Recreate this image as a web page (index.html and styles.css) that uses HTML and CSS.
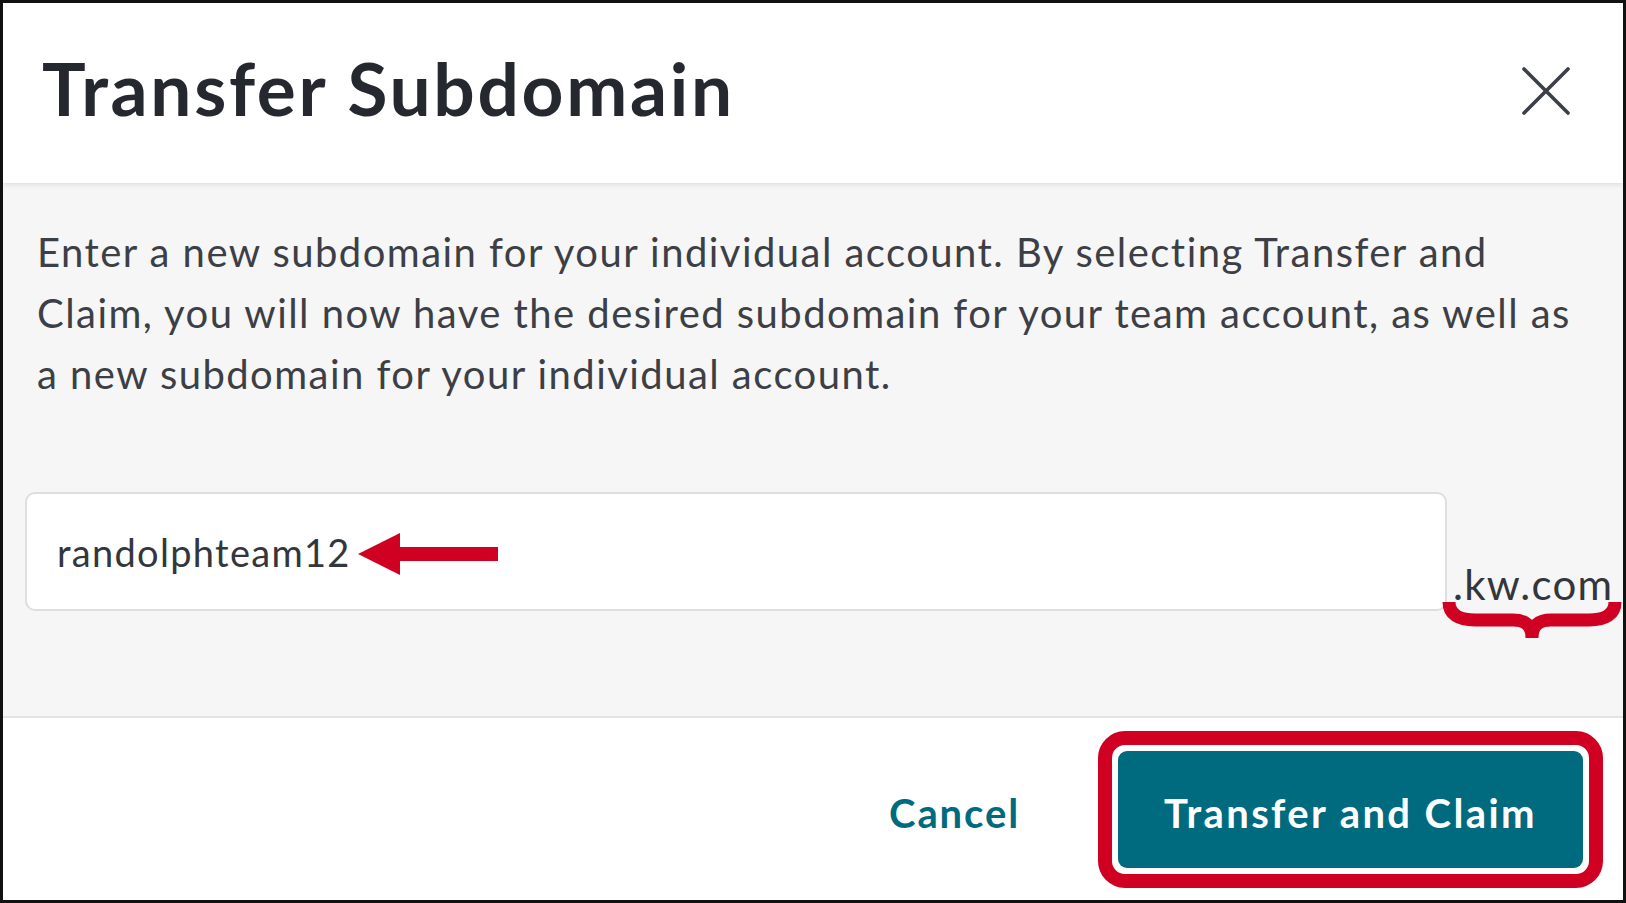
FILE: index.html
```html
<!DOCTYPE html>
<html lang="en">
<head>
<meta charset="utf-8">
<title>Transfer Subdomain</title>
<link rel="stylesheet" href="styles.css">
</head>
<body>
<div class="frame">
  <header class="modal-header">
    <h1 class="title">Transfer Subdomain</h1>
    <button class="close" aria-label="Close">
      <svg viewBox="0 0 48 48" width="48" height="48"><path d="M2 2 L46 46 M46 2 L2 46" stroke="#3b3f46" stroke-width="3.6" stroke-linecap="round" fill="none"/></svg>
    </button>
  </header>
  <main class="modal-body">
    <p class="intro">Enter a new subdomain for your individual account. By selecting Transfer and Claim, you will now have the desired subdomain for your team account, as well as a new subdomain for your individual account.</p>
    <div class="field-row">
      <div class="input">randolphteam12</div>
      <span class="suffix">.kw.com</span>
      <svg class="arrow" width="140" height="42" viewBox="0 0 140 42"><polygon points="0,21 42,0 42,14 140,14 140,28 42,28 42,42" fill="#cf0022"/></svg>
      <svg class="brace" width="184" height="40" viewBox="0 0 184 40"><path d="M8 2 C8 14 17 20 34 20 L72 20 C84 20 91 25 91 38 M174 2 C174 14 165 20 148 20 L110 20 C98 20 91 25 91 38" stroke="#cf0022" stroke-width="13" fill="none"/></svg>
    </div>
  </main>
  <footer class="modal-footer">
    <button class="cancel">Cancel</button>
    <div class="highlight">
      <button class="primary">Transfer and Claim</button>
    </div>
  </footer>
</div>
</body>
</html>
```

FILE: styles.css
```css
* { box-sizing: border-box; }
html, body { margin: 0; padding: 0; background: #ffffff; }
body { font-family: Lato, "Open Sans", sans-serif; }

.frame {
  width: 1626px;
  height: 903px;
  border: 3px solid #111;
  display: flex;
  flex-direction: column;
  background: #fff;
  overflow: hidden;
}

.modal-header {
  height: 180px;
  flex: none;
  display: flex;
  align-items: center;
  justify-content: space-between;
  padding: 0 53px 10px 39px;
  background: #fff;
  box-shadow: 0 2px 5px rgba(0,0,0,0.09);
  position: relative;
  z-index: 2;
}
.title {
  margin: 0;
  font-size: 73px;
  font-weight: 700;
  color: #25282e;
  letter-spacing: 2.7px;
  line-height: 1;
}
.close {
  border: 0;
  background: none;
  padding: 0;
  width: 48px;
  height: 48px;
  display: block;
  margin-top: 6px;
}
.close svg { display: block; }

.modal-body {
  flex: 1;
  background: #f6f6f6;
  padding: 39px 0 0 22px;
}
.intro {
  margin: 0 0 0 12px;
  width: 1550px;
  font-size: 40px;
  line-height: 61px;
  color: #3c3f45;
  letter-spacing: 1.45px;
}

.field-row {
  position: relative;
  margin-top: 87px;
  display: flex;
  align-items: flex-end;
}
.input {
  flex: none;
  width: 1422px;
  height: 119px;
  background: #fff;
  border: 2px solid #dedede;
  border-radius: 10px;
  display: flex;
  align-items: center;
  padding: 0 0 0 30px;
  font-size: 38px;
  color: #33363c;
  letter-spacing: 1.3px;
}
.suffix {
  flex: none;
  font-size: 42px;
  line-height: 42px;
  color: #33363c;
  margin: 0 0 6px 6px;
  letter-spacing: 1.3px;
}
.arrow {
  position: absolute;
  left: 333px;
  top: 41px;
}
.brace {
  position: absolute;
  left: 1416px;
  top: 108px;
}

.modal-footer {
  height: 184px;
  flex: none;
  border-top: 2px solid #e3e3e3;
  background: #fff;
  display: flex;
  align-items: center;
  justify-content: flex-end;
  padding-right: 20px;
}
.cancel {
  border: 0;
  background: none;
  font-family: Lato, "Open Sans", sans-serif;
  font-size: 40px;
  font-weight: 700;
  color: #006a7f;
  padding: 8px 0 0 0;
  margin-right: 78px;
  letter-spacing: 1.9px;
}
.highlight {
  border: 14px solid #cf0022;
  border-radius: 27px;
  padding: 6px;
  background: #fff;
}
.primary {
  display: block;
  width: 465px;
  height: 117px;
  border: 0;
  border-radius: 9px;
  background: #006a7f;
  color: #fff;
  font-family: Lato, "Open Sans", sans-serif;
  font-size: 40px;
  font-weight: 700;
  letter-spacing: 2.4px;
  padding: 8px 0 0 0;
}
```
